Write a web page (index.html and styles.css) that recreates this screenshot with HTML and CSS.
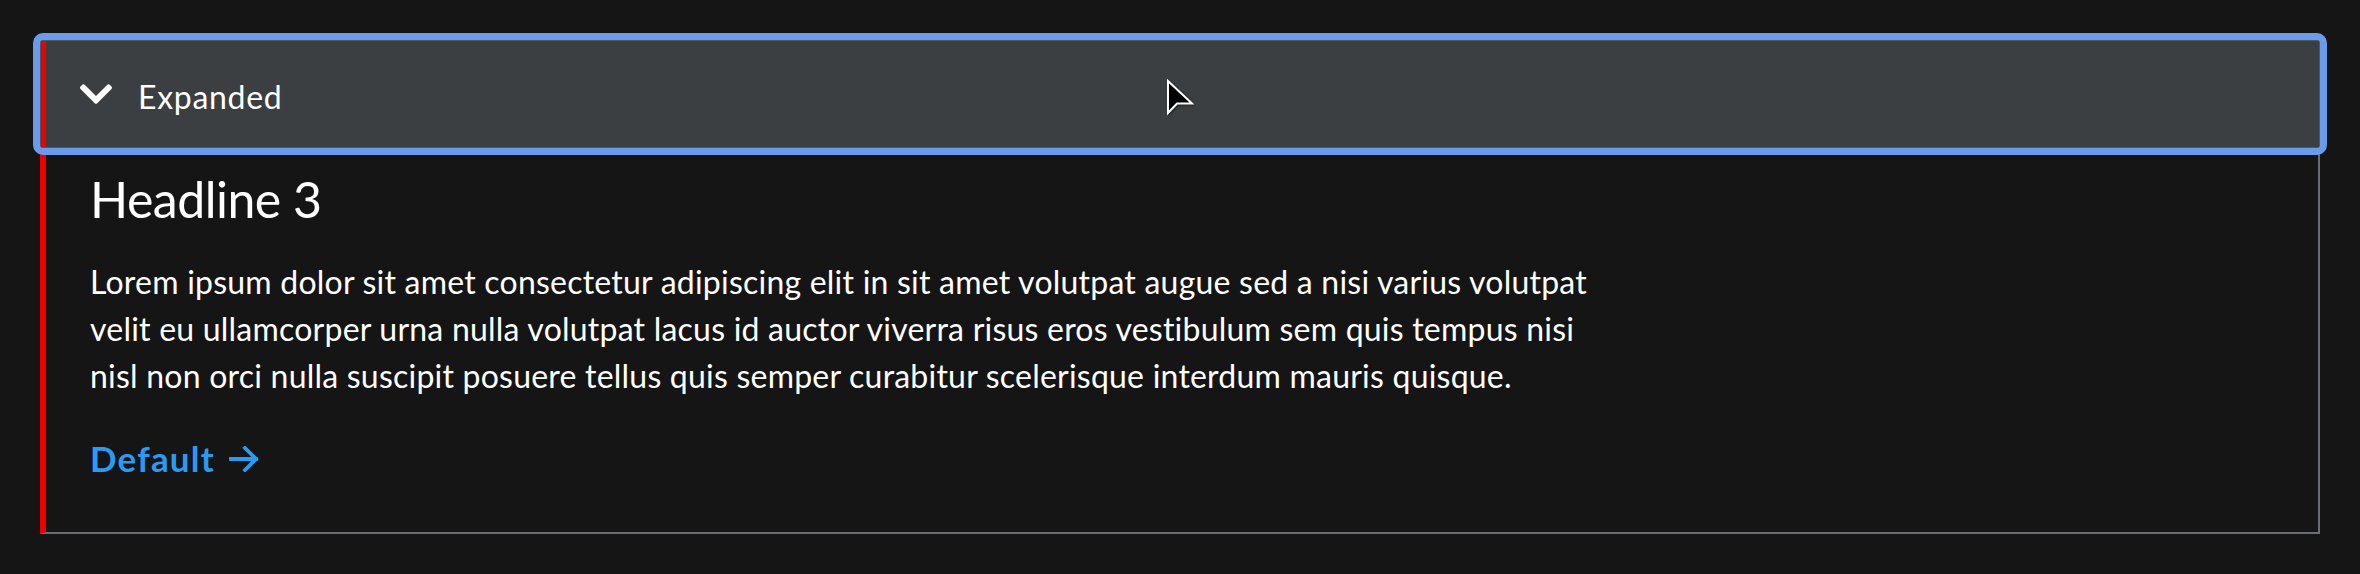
FILE: index.html
```html
<!DOCTYPE html>
<html lang="en">
<head>
<meta charset="utf-8">
<title>Accordion</title>
<link rel="stylesheet" href="styles.css">
</head>
<body>
<div class="accordion">
  <div class="acc-item">
    <button class="acc-header" type="button" aria-expanded="true">
      <svg class="chevron" viewBox="5 123 438 266" width="32" height="20" aria-hidden="true"><path fill="#ffffff" d="M207.029 381.476L12.686 187.132c-9.373-9.373-9.373-24.569 0-33.941l22.667-22.667c9.357-9.357 24.522-9.375 33.901-.04L224 284.505l154.745-154.021c9.379-9.335 24.544-9.317 33.901.04l22.667 22.667c9.373 9.373 9.373 24.569 0 33.941L240.971 381.476c-9.373 9.372-24.569 9.372-33.942 0z"/></svg>
      <span class="acc-title">Expanded</span>
    </button>
    <div class="acc-panel">
      <h3 class="headline">Headline 3</h3>
      <p class="body-text">Lorem ipsum dolor sit amet consectetur adipiscing elit in sit amet volutpat augue sed a nisi varius volutpat<br>velit eu ullamcorper urna nulla volutpat lacus id auctor viverra risus eros vestibulum sem quis tempus nisi<br>nisl non orci nulla suscipit posuere tellus quis semper curabitur scelerisque interdum mauris quisque.</p>
      <a class="cta" href="#">Default<svg class="cta-arrow" viewBox="0 0 30 26" width="30" height="26" aria-hidden="true"><path d="M2 13H27M16 2L27 13L16 24" fill="none" stroke="#2b9af3" stroke-width="3.8" stroke-linecap="square" stroke-linejoin="miter"/></svg></a>
    </div>
  </div>
</div>
<svg class="cursor" viewBox="0 0 30 38" width="30" height="38" aria-hidden="true"><path d="M2 2V34L11 24.5H26Z" fill="#000000" stroke="#ffffff" stroke-width="2" stroke-linejoin="miter"/></svg>
</body>
</html>
```
FILE: styles.css
```css
* { box-sizing: border-box; }
html, body { margin: 0; }
body {
  background: #151515;
  padding: 40px;
  font-family: Lato, "Liberation Sans", sans-serif;
  color: #ffffff;
  position: relative;
  height: 574px;
}
.accordion { width: 100%; }
.acc-item { display: flex; flex-direction: column; }
.acc-header {
  position: relative;
  display: flex;
  align-items: center;
  gap: 26px;
  width: 100%;
  height: 108px;
  margin: 0;
  padding: 0 0 0 39px;
  background: #3c3f42;
  border: 1px solid #505861;
  box-shadow: inset 5px 0 0 #ee0000;
  font: inherit;
  color: #ffffff;
  text-align: left;
  cursor: pointer;
}
.acc-header::after {
  content: "";
  position: absolute;
  inset: -8px;
  border: 7px solid #6b9beb;
  border-radius: 10px;
  pointer-events: none;
}
.chevron { flex: none; display: block; }
.acc-title {
  font-size: 32px;
  letter-spacing: 0.7px;
  line-height: 1.2;
  padding-top: 6px;
  font-weight: 400;
}
.acc-panel {
  border-left: 6px solid #ee0000;
  border-right: 2px solid #6a6e73;
  border-bottom: 2px solid #6a6e73;
  padding: 21px 40px 52px 44px;
  display: flex;
  flex-direction: column;
  align-items: flex-start;
  height: 386px;
}
.headline {
  margin: 0;
  font-size: 50px;
  letter-spacing: -0.5px;
  line-height: 60px;
  font-weight: 400;
}
.body-text {
  margin: 29px 0 0;
  font-size: 32px;
  letter-spacing: 0.22px;
  line-height: 47px;
  white-space: nowrap;
}
.cta {
  margin-top: 38px;
  display: inline-flex;
  align-items: center;
  gap: 14px;
  font-size: 35px;
  letter-spacing: 1.2px;
  line-height: 42px;
  font-weight: 700;
  color: #2b9af3;
  text-decoration: none;
}
.cta-arrow { display: block; margin-top: 2px; }
.cursor {
  position: absolute;
  left: 1166px;
  top: 79px;
  filter: drop-shadow(1px 1px 1px rgba(0,0,0,0.5));
}
```
